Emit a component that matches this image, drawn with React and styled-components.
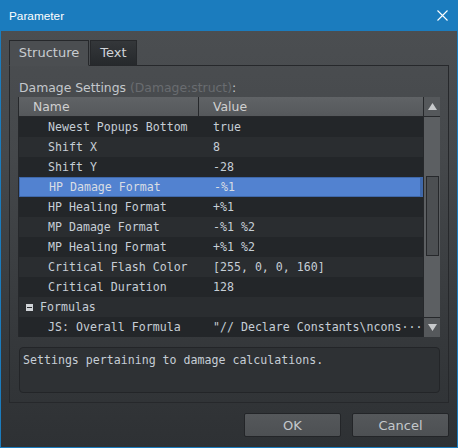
import React from "react";
import styled, {createGlobalStyle} from "styled-components";

const GlobalStyle = createGlobalStyle`
    body {
        margin: 0;
        background: #2f3235;
    }
`;

const Window = styled.div`
    width: 458px;
    height: 448px;
    box-sizing: border-box;
    display: flex;
    flex-direction: column;
    border: 1px solid #1b7cbe;
    border-top: none;
    font-family: "DejaVu Sans", sans-serif;
`;

const TitleBar = styled.div`
    height: 31px;
    flex: none;
    display: flex;
    align-items: center;
    justify-content: space-between;
    padding: 0 9px 0 8px;
    background: #1b7cbe;
    color: #ffffff;
    font-family: "Liberation Sans", sans-serif;
    font-size: 11.8px;
`;

const Body = styled.div`
    flex: 1;
    display: flex;
    flex-direction: column;
    padding: 9px 8px 10px 8px;
    background: linear-gradient(#4b4e51 0%, #45484b 30%, #35383b 75%, #2e3134 100%);
`;

const TabRow = styled.div`
    display: flex;
    height: 26px;
    margin-bottom: -1px;
    position: relative;
    z-index: 1;
`;

const Tab = styled.div`
    box-sizing: border-box;
    width: ${props => props.width}px;
    height: 26px;
    display: flex;
    align-items: center;
    justify-content: center;
    padding-bottom: 1px;
    font-size: 13px;
    border: 1px solid #26282b;
    border-bottom: ${props => props.active ? "1px solid #4b4e51" : "1px solid #26282b"};
    margin-right: 1px;
    color: ${props => props.active ? "#c8ccd0" : "#d0d4d8"};
    background: ${props => props.active ? "#4b4e51" : "linear-gradient(#34373a, #26292c)"};
`;

const Panel = styled.div`
    box-sizing: border-box;
    height: 338px;
    flex: none;
    border: 1px solid #26282b;
    padding: 13px 8px 9px 9px;
    display: flex;
    flex-direction: column;
`;

const Label = styled.div`
    height: 18px;
    line-height: 18px;
    font-size: 12.4px;
    color: #c4c8cc;
`;

const Faint = styled.span`
    color: #696c70;
`;

const Table = styled.div`
    display: flex;
    height: 240px;
    margin-left: -1px;
    border-left: 1px solid #26282b;
`;

const Grid = styled.div`
    flex: 1;
    display: flex;
    flex-direction: column;
`;

const Header = styled.div`
    box-sizing: border-box;
    display: grid;
    grid-template-columns: 180px 1fr;
    height: 20px;
    border-bottom: 1px solid #26282b;
    background: linear-gradient(#606366, #55585b);
    color: #d0d0d0;
    font-size: 12.4px;
`;

const HeaderCell = styled.div`
    line-height: 19px;
    padding-left: 14px;
    border-right: 1px solid #26282b;

    &:last-child {
        border-right: none;
    }
`;

const Row = styled.div`
    box-sizing: border-box;
    display: grid;
    grid-template-columns: 180px 1fr;
    height: 20px;
    line-height: 20px;
    font-family: "DejaVu Sans Mono", monospace;
    font-size: 11.6px;
    white-space: pre;
    color: ${props => props.selected ? "#d8dde4" : "#c6ced6"};
    background: ${props => props.selected ? "#5282d0" : props.odd ? "#2a2d30" : "#232629"};
    ${props => props.selected && `
        border: 1px solid #3f68aa;
        border-right-width: 3px;
        line-height: 18px;
    `}
`;

const NameCell = styled.div`
    padding-left: ${props => props.group ? 7 : 29}px;
    display: flex;
    align-items: center;
    gap: 7px;
`;

const ValueCell = styled.div`
    padding-left: 14px;
    overflow: hidden;
`;

const Toggle = styled.div`
    width: 7px;
    height: 7px;
    box-sizing: border-box;
    background: #d0d4d8;
    position: relative;

    &::after {
        content: "";
        position: absolute;
        left: 1px;
        right: 1px;
        top: 3px;
        height: 1px;
        background: #2a2d30;
    }
`;

const ScrollBar = styled.div`
    width: 17px;
    box-sizing: border-box;
    display: flex;
    flex-direction: column;
    background: #5c5f62;
    border-left: 1px solid #26282b;
`;

const ScrollButton = styled.div`
    height: 20px;
    box-sizing: border-box;
    display: flex;
    align-items: center;
    justify-content: center;
    background: #55585b;
    border-top: ${props => props.down ? "1px solid #26282b" : "none"};
    border-bottom: ${props => props.down ? "none" : "1px solid #26282b"};
`;

const Track = styled.div`
    flex: 1;
    padding-top: 59px;
    display: flex;
    justify-content: center;
`;

const Thumb = styled.div`
    width: 13px;
    height: 80px;
    box-sizing: border-box;
    border: 1px solid #26282b;
    background: #4c4f52;
`;

const Description = styled.div`
    margin-top: 10px;
    height: 46px;
    box-sizing: border-box;
    border: 1px solid #232528;
    border-radius: 4px;
    background: #2e3134;
    padding: 3px 3px;
    font-family: "DejaVu Sans Mono", monospace;
    font-size: 11.6px;
    line-height: 18px;
    color: #c6ced6;
    white-space: pre;
`;

const Footer = styled.div`
    margin-top: 10px;
    display: flex;
    justify-content: flex-end;
    gap: 11px;
`;

const Button = styled.div`
    width: 97px;
    height: 24px;
    box-sizing: border-box;
    border: 1px solid #232528;
    border-radius: 2px;
    background: linear-gradient(#55585b, #4d5053);
    display: flex;
    align-items: center;
    justify-content: center;
    color: #c4c8cc;
    font-size: 13px;
`;

const rows = [
    ["Newest Popups Bottom", "true"],
    ["Shift X", "8"],
    ["Shift Y", "-28"],
    ["HP Damage Format", "-%1", true],
    ["HP Healing Format", "+%1"],
    ["MP Damage Format", "-%1 %2"],
    ["MP Healing Format", "+%1 %2"],
    ["Critical Flash Color", "[255, 0, 0, 160]"],
    ["Critical Duration", "128"],
    ["Formulas", null],
    ["JS: Overall Formula", "\"// Declare Constants\\ncons···"],
];

const CloseIcon = () => (
    <svg width="11" height="11" viewBox="0 0 11 11">
        <path d="M0.5 0.5 L10.5 10.5 M10.5 0.5 L0.5 10.5" stroke="#ffffff" strokeWidth="1.1" fill="none"/>
    </svg>
);

const Arrow = ({down}) => (
    <svg width="9" height="7" viewBox="0 0 9 7">
        <path d={down ? "M0 0 L9 0 L4.5 7 Z" : "M0 7 L9 7 L4.5 0 Z"} fill="#c8cacc"/>
    </svg>
);

const App = () => {
    return (
        <Window>
            <GlobalStyle/>
            <TitleBar>
                <span>Parameter</span>
                <CloseIcon/>
            </TitleBar>
            <Body>
                <TabRow>
                    <Tab active width={80}>Structure</Tab>
                    <Tab width={47}>Text</Tab>
                </TabRow>
                <Panel>
                    <Label>Damage Settings <Faint>(Damage:struct)</Faint>:</Label>
                    <Table>
                        <Grid>
                            <Header>
                                <HeaderCell>Name</HeaderCell>
                                <HeaderCell>Value</HeaderCell>
                            </Header>
                            {rows.map(([name, value, selected], i) => (
                                <Row key={name} odd={i % 2 === 1} selected={selected}>
                                    {value === null ? (
                                        <NameCell group><Toggle/>{name}</NameCell>
                                    ) : (
                                        <NameCell>{name}</NameCell>
                                    )}
                                    <ValueCell>{value}</ValueCell>
                                </Row>
                            ))}
                        </Grid>
                        <ScrollBar>
                            <ScrollButton><Arrow/></ScrollButton>
                            <Track><Thumb/></Track>
                            <ScrollButton down><Arrow down/></ScrollButton>
                        </ScrollBar>
                    </Table>
                    <Description>Settings pertaining to damage calculations.</Description>
                </Panel>
                <Footer>
                    <Button>OK</Button>
                    <Button>Cancel</Button>
                </Footer>
            </Body>
        </Window>
    );
};

export default App;
